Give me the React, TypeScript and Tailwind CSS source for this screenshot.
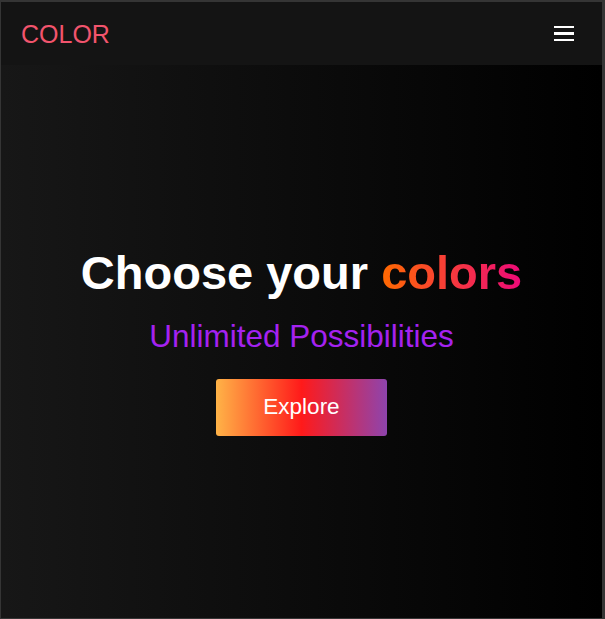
const App = () => {
  return (
    <div
      className="w-[605px] h-[619px] flex flex-col border-t-2 border-l border-b border-r-[3px] border-[#353535] bg-[linear-gradient(to_right,#171717,#000000)]"
      style={{ fontFamily: '"Liberation Sans", Arial, sans-serif' }}
    >
      <header className="h-[63px] shrink-0 flex items-center justify-between bg-[#141414] pl-5 pr-[28px]">
        <span className="text-[25px] text-[#f2546d] leading-none pt-[1px]">COLOR</span>
        <button className="flex flex-col gap-[4px] w-[20px]">
          <span className="block h-[2.5px] w-full bg-white" />
          <span className="block h-[2.5px] w-full bg-white" />
          <span className="block h-[2.5px] w-full bg-white" />
        </button>
      </header>

      <main className="flex-1 flex flex-col items-center justify-center pb-[3px]">
        <h1 className="text-[47px] font-bold text-white leading-[56px]">
          Choose your{" "}
          <span className="bg-[linear-gradient(to_right,#ff6a00,#ee0979)] bg-clip-text text-transparent">
            colors
          </span>
        </h1>
        <p className="mt-[17px] text-[31.5px] text-[#a422f0] leading-[37px]">Unlimited Possibilities</p>
        <button className="mt-[24px] w-[171px] h-[57px] rounded-[3px] text-[22.5px] text-white bg-[linear-gradient(to_right,#ffb347,#ff1a1a,#8e44ad)]">
          Explore
        </button>
      </main>
    </div>
  );
};

export default App;
